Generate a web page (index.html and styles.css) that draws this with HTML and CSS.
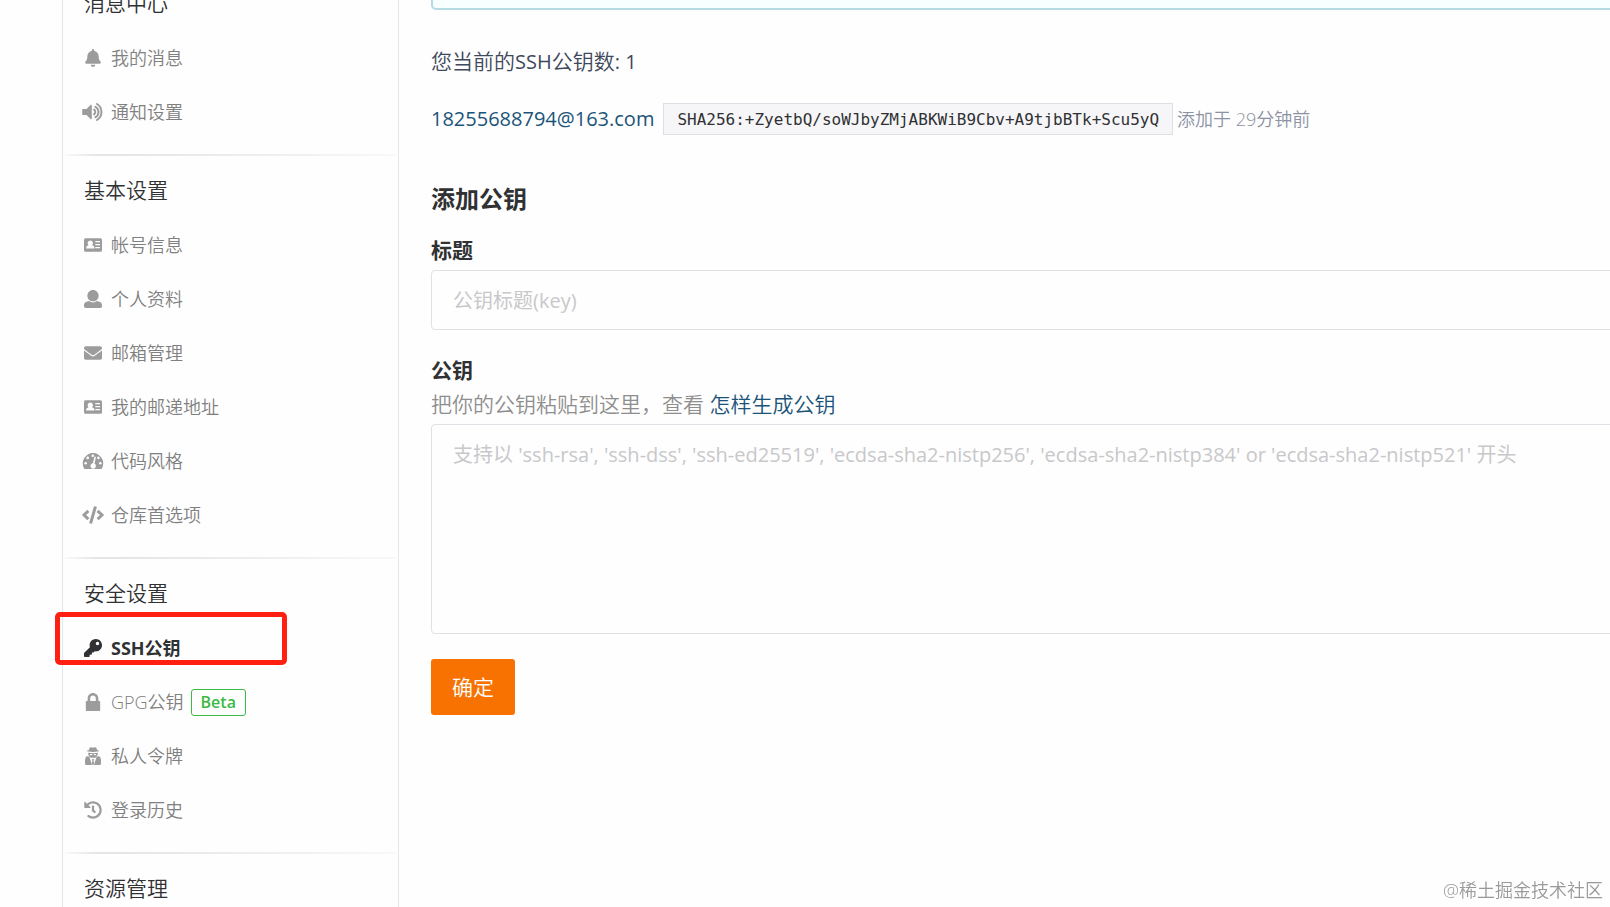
FILE: index.html
```
<!DOCTYPE html>
<html lang="zh-CN">
<head>
<meta charset="utf-8">
<title>SSH公钥</title>
<link rel="stylesheet" href="styles.css">
</head>
<body>
<div class="page">
  <nav class="sidebar" aria-label="设置">
    <section class="group">
      <h2 class="group-title">消息中心</h2>
      <a class="item" href="#"><svg class="icon" viewBox="0 0 448 512" aria-hidden="true"><path d="M224 512c35.32 0 63.97-28.65 63.97-64H160.03c0 35.35 28.65 64 63.97 64zm215.39-149.71c-19.32-20.76-55.47-51.99-55.47-154.29 0-77.7-54.48-139.9-127.94-155.16V32c0-17.67-14.32-32-31.98-32s-31.98 14.33-31.98 32v20.84C118.56 68.1 64.08 130.3 64.08 208c0 102.3-36.15 133.53-55.47 154.29-6 6.45-8.66 14.16-8.61 21.71.11 16.4 12.98 32 32.1 32h383.8c19.12 0 32-15.6 32.1-32 .05-7.55-2.61-15.27-8.61-21.71z"/></svg>我的消息</a>
      <a class="item" href="#"><svg class="icon" viewBox="0 0 22 18" aria-hidden="true"><path d="M1 6h3.500l4-4q1-.8 1.300.4v13.200q-.3 1.200-1.300.4l-4-4H1q-.8 0-.8-.8V6.800Q.2 6 1 6z"/><path class="stroke" d="M12 6.700a2.700 2.700 0 0 1 0 4.600M13.500 3.800a6 6 0 0 1 0 10.400M15 1a9.400 9.400 0 0 1 0 16"/></svg>通知设置</a>
    </section>
    <section class="group">
      <h2 class="group-title">基本设置</h2>
      <a class="item" href="#"><svg class="icon" viewBox="0 0 18 18" aria-hidden="true"><path fill-rule="evenodd" d="M1.500 2.300h15q1.500 0 1.500 1.500v10.400q0 1.500-1.500 1.500h-15Q0 15.700 0 14.200V3.800Q0 2.300 1.500 2.300zM6.300 4.500a2.700 2.700 0 0 0-1.800 4.700Q2 9.800 2 12.400h8.600q0-2.600-2.500-3.200a2.700 2.700 0 0 0-1.800-4.700zM11.300 5v1.300H16V5zm0 3v1.300H16V8zm0 3v1.300H16V11z"/></svg>帐号信息</a>
      <a class="item" href="#"><svg class="icon" viewBox="0 0 512 512" aria-hidden="true"><path d="M256 0c88.366 0 160 71.634 160 160s-71.634 160-160 160S96 248.366 96 160 167.634 0 256 0zm183.283 333.821l-71.313-17.828c-74.923 53.89-165.738 41.864-223.94 0l-71.313 17.828C29.981 344.505 0 382.903 0 426.955V464c0 26.51 21.49 48 48 48h416c26.51 0 48-21.49 48-48v-37.045c0-44.052-29.981-82.45-72.717-93.134z"/></svg>个人资料</a>
      <a class="item" href="#"><svg class="icon" viewBox="0 0 512 512" aria-hidden="true"><path d="M502.3 190.8c3.9-3.1 9.7-.2 9.7 4.7V400c0 26.5-21.5 48-48 48H48c-26.5 0-48-21.5-48-48V195.6c0-5 5.7-7.8 9.7-4.7 22.4 17.4 52.1 39.5 154.1 113.6 21.1 15.4 56.7 47.8 92.2 47.6 35.7.3 72-32.8 92.3-47.6 102-74.1 131.6-96.3 154-113.7zM256 320c23.2.4 56.6-29.2 73.4-41.4 132.7-96.3 142.8-104.7 173.4-128.7 5.8-4.5 9.2-11.5 9.2-18.9v-19c0-26.5-21.5-48-48-48H48c-26.5 0-48 21.5-48 48v19c0 7.4 3.4 14.3 9.2 18.9 30.6 23.9 40.7 32.4 173.4 128.7 16.8 12.2 50.2 41.8 73.4 41.4z"/></svg>邮箱管理</a>
      <a class="item" href="#"><svg class="icon" viewBox="0 0 18 18" aria-hidden="true"><path fill-rule="evenodd" d="M1.500 2.300h15q1.500 0 1.500 1.500v10.400q0 1.500-1.500 1.500h-15Q0 15.700 0 14.200V3.800Q0 2.300 1.500 2.300zM6.300 4.500a2.700 2.700 0 0 0-1.800 4.700Q2 9.800 2 12.400h8.600q0-2.600-2.500-3.200a2.700 2.700 0 0 0-1.800-4.700zM11.300 5v1.300H16V5zm0 3v1.300H16V8zm0 3v1.300H16V11z"/></svg>我的邮递地址</a>
      <a class="item" href="#"><svg class="icon" viewBox="0 0 21 18" aria-hidden="true"><path d="M10.500 1A10.300 10.300 0 0 0 1.600 16.400q.3.600 1 .6h15.800q.7 0 1-.6A10.300 10.300 0 0 0 10.500 1z"/><g class="cut"><circle cx="10.300" cy="3.700" r="1.300"/><circle cx="5.200" cy="5.900" r="1.300"/><circle cx="15.900" cy="5.900" r="1.300"/><circle cx="3.200" cy="11.300" r="1.300"/><circle cx="17.800" cy="11.300" r="1.300"/><path d="M12.200 4.600l1.300.4-1.500 6.600a2.700 2.700 0 1 1-1.700-.3z"/></g></svg>代码风格</a>
      <a class="item" href="#"><svg class="icon" viewBox="0 0 640 512" aria-hidden="true"><path d="M278.9 511.5l-61-17.7c-6.4-1.800-10-8.5-8.2-14.9L346.2 8.7c1.8-6.4 8.500-10 14.900-8.200l61 17.700c6.400 1.800 10 8.500 8.200 14.900L293.800 503.300c-1.900 6.400-8.500 10.100-14.900 8.200zm-114-112.200l43.5-46.400c4.600-4.900 4.300-12.700-.8-17.200L117 256l90.600-79.700c5.100-4.500 5.500-12.300.8-17.200l-43.500-46.400c-4.500-4.800-12.100-5.100-17-.5L3.800 247.200c-5.100 4.700-5.100 12.800 0 17.500l144.100 135.100c4.900 4.600 12.500 4.400 17-.5zm327.200.6l144.100-135.100c5.100-4.700 5.100-12.800 0-17.500L492.100 112.100c-4.800-4.500-12.400-4.300-17 .5L431.600 159c-4.600 4.900-4.300 12.700.8 17.200L523 256l-90.600 79.700c-5.100 4.500-5.500 12.300-.8 17.200l43.500 46.400c4.500 4.900 12.100 5.100 17 .6z"/></svg>仓库首选项</a>
    </section>
    <section class="group">
      <h2 class="group-title">安全设置</h2>
      <a class="item active" href="#" aria-current="page"><svg class="icon" viewBox="0 0 512 512" aria-hidden="true"><path d="M512 176.001C512 273.203 433.202 352 336 352c-11.22 0-22.19-1.062-32.827-3.069l-24.012 27.014A23.999 23.999 0 0 1 261.223 384H224v40c0 13.255-10.745 24-24 24h-40v40c0 13.255-10.745 24-24 24H24c-13.255 0-24-10.745-24-24v-78.059c0-6.365 2.529-12.470 7.029-16.971l161.802-161.802C163.108 213.814 160 195.271 160 176 160 78.798 238.797.001 335.999 0 433.488-.001 512 78.511 512 176.001zM336 128c0 26.510 21.490 48 48 48s48-21.490 48-48-21.490-48-48-48-48 21.490-48 48z"/></svg>SSH公钥<span class="highlight"></span></a>
      <a class="item" href="#"><svg class="icon" viewBox="0 0 448 512" aria-hidden="true"><path d="M408 224h-32v-72C376 68.2 307.8 0 224 0S72 68.2 72 152v72H40c-12 0-20 8-20 20v248c0 12 8 20 20 20h368c12 0 20-8 20-20V244c0-12-8-20-20-20zm-104 0H144v-72c0-44 36-80 80-80s80 36 80 80v72z"/></svg>GPG公钥<span class="beta">Beta</span></a>
      <a class="item" href="#"><svg class="icon" viewBox="0 0 16 18" aria-hidden="true"><path d="M3.700 3.300L4.700.8Q5 0 6 .3l2 .5 2-.5q1-.3 1.300.5l1 2.500q1.900.3 1.900.8 0 .8-6.200.8t-6.200-.8q0-.5 1.900-.8z"/><path fill-rule="evenodd" d="M3.300 5.800q4.700.7 9.400 0l.3 1.500q-.7.600-.9 1.500-.8 1.800-2.600 2.300L8 10.600l-1.500.5Q4.700 10.600 3.900 8.800 3.700 7.900 3 7.300zM4.600 6.900l.5 1.400h1.600l.8-1.400zM8.500 6.900l.8 1.400h1.600l.5-1.400z"/><path d="M1.800 9.300L4.300 9.600l2.700 8.400H1.500Q0 18 0 16.500v-3.300Q.1 10.500 1.800 9.300zM14.200 9.300l-2.500.3L9 18h5.500q1.500 0 1.500-1.500v-3.300q-.1-2.700-1.800-3.900zM7 12h2l-.4 1.500.6 3.500L8 18l-1.200-1 .6-3.500z"/></svg>私人令牌</a>
      <a class="item" href="#"><svg class="icon" viewBox="0 0 512 512" aria-hidden="true"><path d="M504 255.531c.253 136.640-111.180 248.372-247.820 248.468-59.015.042-113.223-20.530-155.822-54.911-11.077-8.940-11.905-25.541-1.839-35.607l11.267-11.267c8.609-8.609 22.353-9.551 31.891-1.984C173.062 425.135 212.781 440 256 440c101.705 0 184-82.311 184-184 0-101.705-82.311-184-184-184-48.814 0-93.149 18.969-126.068 49.932l50.754 50.754c10.080 10.080 2.941 27.314-11.313 27.314H24c-8.837 0-16-7.163-16-16V38.627c0-14.254 17.234-21.393 27.314-11.314l49.372 49.372C129.209 34.136 189.552 8 256 8c136.810 0 247.747 110.780 248 247.531zm-180.912 78.784l9.823-12.630c8.138-10.463 6.253-25.542-4.210-33.679L288 256.349V152c0-13.255-10.745-24-24-24h-16c-13.255 0-24 10.745-24 24v135.651l65.409 50.874c10.463 8.137 25.541 6.253 33.679-4.210z"/></svg>登录历史</a>
    </section>
    <section class="group">
      <h2 class="group-title">资源管理</h2>
    </section>
  </nav>
  <main class="content">
    <div class="notice"></div>
    <p class="count">您当前的<span class="latin">SSH</span>公钥数<span class="latin">: 1</span></p>
    <div class="key-row">
      <a class="link key-name" href="#">18255688794@163.com</a>
      <code class="fingerprint">SHA256:+ZyetbQ/soWJbyZMjABKWiB9Cbv+A9tjbBTk+Scu5yQ</code>
      <span class="added">添加于 29分钟前</span>
    </div>
    <form class="form">
      <h3 class="form-title">添加公钥</h3>
      <label class="label" for="key-title">标题</label>
      <input class="field" id="key-title" type="text" placeholder="公钥标题(key)">
      <label class="label label-key" for="key-body">公钥</label>
      <p class="help">把你的公钥粘贴到这里，查看 <a class="link" href="#">怎样生成公钥</a></p>
      <textarea class="field area" id="key-body" placeholder="支持以 'ssh-rsa', 'ssh-dss', 'ssh-ed25519', 'ecdsa-sha2-nistp256', 'ecdsa-sha2-nistp384' or 'ecdsa-sha2-nistp521' 开头"></textarea>
      <button class="submit" type="button">确定</button>
    </form>
  </main>
</div>
<div class="watermark">@稀土掘金技术社区</div>
</body>
</html>
```
FILE: styles.css
```
* { box-sizing: border-box; }
html, body { height: 100%; }
body {
  margin: 0;
  overflow: hidden;
  background: #fefefe;
  color: #40485b;
  font-family: "Open Sans", "Noto Sans CJK SC", sans-serif;
  font-size: 21px;
  font-weight: 350;
  line-height: 32px;
}
h2, h3, p { margin: 0; }
a { color: inherit; text-decoration: none; }
.page { display: flex; min-height: 100%; padding-left: 62px; }

.sidebar {
  flex: none;
  width: 337px;
  margin-top: -31px;
  border: solid #dfe6ec;
  border-width: 0 1px;
  padding: 0 2px;
}
.group { padding: 8px 0 15px; }
.group:not(:last-child) {
  border-bottom: 2px solid;
  border-image: linear-gradient(to right, #fafafa, #e4e4e4 10%, #ececec 50%, #f8f8f8) 1;
}
.group-title {
  padding: 0 0 2px 19px;
  color: #303133;
  font-size: 21px;
  font-weight: 350;
  line-height: 52px;
}
.item {
  position: relative;
  display: flex;
  align-items: center;
  height: 54px;
  padding-left: 17px;
  color: #808080;
  font-size: 18px;
}
.icon { width: 22px; height: 18px; margin-right: 7px; fill: #9c9c9c; }
.icon .stroke { fill: none; stroke: #9c9c9c; stroke-width: 2; stroke-linecap: round; }
.icon .cut { fill: #fefefe; }
.item.active { color: #303133; font-weight: 700; }
.active .icon { fill: #303133; }
.highlight {
  position: absolute;
  top: -9px;
  left: -10px;
  width: 232px;
  height: 53px;
  border: 5px solid #ff2012;
  border-radius: 5px;
}
.beta {
  margin-left: 7px;
  padding: 0 9px;
  border: 1px solid #3dba44;
  border-radius: 3px;
  color: #3dba44;
  font-size: 16px;
  font-weight: 600;
  line-height: 25px;
}

.content { flex: 1; min-width: 0; padding-left: 32px; }
.notice {
  height: 10px;
  margin-right: -20px;
  border: 2px solid #b5dbe3;
  border-top: 0;
  border-radius: 0 0 5px 5px;
  background: #f8ffff;
}
.count { padding-top: 35px; }
.latin { font-size: 20px; font-weight: 400; }
.key-row { display: flex; align-items: center; padding-top: 25px; white-space: nowrap; }
.link { color: #1b5479; }
.key-name { margin-right: 9px; font-size: 20px; font-weight: 400; }
.fingerprint {
  padding: 2px 13px 0;
  border: 1px solid #dedee4;
  background: #f6f6f9;
  color: #303133;
  font-family: "DejaVu Sans Mono", monospace;
  font-size: 16px;
  font-weight: 400;
  line-height: 28px;
}
.added { margin-left: 4px; color: #8c92a4; font-size: 18px; }

.form { display: flex; flex-direction: column; align-items: stretch; margin-right: -20px; padding-top: 48px; }
.form-title { color: #303133; font-size: 24px; font-weight: 700; }
.label { padding-top: 20px; color: #303133; font-weight: 700; line-height: 30px; }
.label-key { padding-top: 25px; }
.help { color: #8e8e8e; line-height: 39px; }
.field {
  height: 60px;
  margin-top: 5px;
  padding: 0 21px;
  border: 1px solid #e0e0e6;
  border-radius: 4px;
  background: #fefefe;
  font: inherit;
  font-size: 20px;
  font-weight: 400;
  outline: 0;
}
.area { height: 210px; margin-top: 0; padding-top: 14px; resize: none; }
.field::placeholder { color: #c8c8ca; opacity: 1; }
.submit {
  align-self: flex-start;
  margin-top: 25px;
  padding: 12px 21px;
  border: 0;
  border-radius: 3px;
  background: #f77200;
  color: #fff;
  font: inherit;
}
.watermark {
  position: fixed;
  right: 7px;
  bottom: 1px;
  color: #999;
  font-size: 18px;
}
```
